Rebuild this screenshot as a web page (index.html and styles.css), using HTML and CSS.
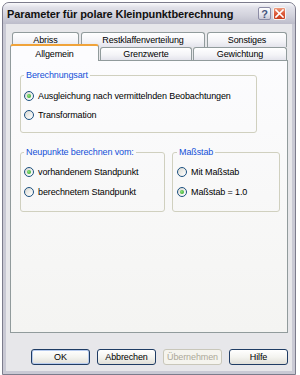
FILE: index.html
```html
<!DOCTYPE html>
<html lang="de">
<head>
  <meta charset="UTF-8" />
  <title>Parameter für polare Kleinpunktberechnung</title>
  <link rel="stylesheet" href="styles.css">
</head>
<body>
  <div class="window">
    <div class="titlebar">
      <span class="title">Parameter für polare Kleinpunktberechnung</span>
      <div class="caption-buttons">
        <span class="cap-btn help">?</span>
        <span class="cap-btn close">
          <svg width="9" height="9" viewBox="0 0 9 9">
            <path d="M1 1 L8 8 M8 1 L1 8" stroke="#fff" stroke-width="1.6" stroke-linecap="square" />
          </svg>
        </span>
      </div>
    </div>

    <div class="client">
      <div class="tabs">
        <div class="tab-row back">
          <div class="tab tab-abriss">Abriss</div>
          <div class="tab tab-rest">Restklaffenverteilung</div>
          <div class="tab tab-sonst">Sonstiges</div>
        </div>
        <div class="tab-row front">
          <div class="tab active tab-allg">Allgemein</div>
          <div class="tab tab-grenz">Grenzwerte</div>
          <div class="tab tab-gew">Gewichtung</div>
        </div>
      </div>

      <div class="page">
        <fieldset class="group group-art">
          <legend>Berechnungsart</legend>
          <div class="option"><span class="radio checked"></span>Ausgleichung nach vermittelnden Beobachtungen</div>
          <div class="option"><span class="radio"></span>Transformation</div>
        </fieldset>

        <div class="group-row">
          <fieldset class="group group-neu">
            <legend>Neupunkte berechnen vom:</legend>
            <div class="option"><span class="radio checked"></span>vorhandenem Standpunkt</div>
            <div class="option"><span class="radio"></span>berechnetem Standpunkt</div>
          </fieldset>
          <fieldset class="group group-mass">
            <legend>Maßstab</legend>
            <div class="option"><span class="radio"></span>Mit Maßstab</div>
            <div class="option"><span class="radio checked"></span>Maßstab = 1.0</div>
          </fieldset>
        </div>
      </div>

      <div class="buttons">
        <button class="btn default">OK</button>
        <button class="btn">Abbrechen</button>
        <button class="btn" disabled>Übernehmen</button>
        <button class="btn">Hilfe</button>
      </div>
    </div>
  </div>
</body>
</html>
```

FILE: styles.css
```css
body {
  margin: 0;
  background: #fff;
  font-family: 'Liberation Sans', Arial, sans-serif;
  font-size: 9px;
  letter-spacing: -0.12px;
  color: #000;
}

.window {
  margin: 2px 0 0 2px;
  width: 294px;
  height: 373px;
  box-sizing: border-box;
  border: 1px solid #7c7c8c;
  border-radius: 7px 7px 0 0;
  background: #c9c9d4;
  display: flex;
  flex-direction: column;
}

.titlebar {
  height: 21px;
  flex: none;
  display: flex;
  align-items: center;
  justify-content: space-between;
  padding: 0 9px 0 4px;
  border-radius: 6px 6px 0 0;
  background: linear-gradient(#fafafc, #e2e2ea 20%, #d2d2dc 60%, #bdbdca);
}

.title {
  font-weight: bold;
  font-size: 11px;
  letter-spacing: -0.1px;
  color: #111;
}

.caption-buttons {
  display: flex;
  gap: 2px;
}

.cap-btn {
  width: 13px;
  height: 13px;
  box-sizing: border-box;
  border-radius: 2px;
  display: flex;
  align-items: center;
  justify-content: center;
}

.help {
  border: 1px solid #8d8da6;
  background: linear-gradient(#ffffff, #e4e4ec 60%, #c9c9d6);
  color: #46557e;
  font-weight: bold;
  font-size: 11px;
}

.close {
  border: 1px solid #f4f4f4;
  background: linear-gradient(#ee9a7c, #dc5b3b 50%, #c63d1d);
}

.client {
  flex: 1;
  margin: 0 3px 3px;
  padding: 8px 4px 0;
  background: #e7e7ea;
  display: flex;
  flex-direction: column;
}

/* tabs */

.tab-row {
  display: flex;
}

.back {
  height: 15px;
  padding-left: 2px;
  gap: 2px;
}

.front {
  height: 13px;
  gap: 1px;
}

.tab {
  box-sizing: border-box;
  height: 100%;
  border: 1px solid #919b9c;
  border-bottom: none;
  border-radius: 3px 3px 0 0;
  background: linear-gradient(#ffffff, #f3f3f7 60%, #e4e4ec);
  display: flex;
  align-items: center;
  justify-content: center;
}

.tab-abriss { width: 67px; }
.tab-rest { width: 124px; }
.tab-sonst { width: 80px; }
.tab-allg { width: 89px; }
.tab-grenz { width: 92px; }
.tab-gew { width: 94px; }

.tab.active {
  height: 17px;
  margin-top: -3px;
  border-top: 2px solid #f0a33a;
  background: #fcfcfe;
  position: relative;
  z-index: 1;
}

/* page */

.page {
  height: 273px;
  box-sizing: border-box;
  border: 1px solid #919b9c;
  background: linear-gradient(#fcfcfe, #f4f4f2);
  padding: 9px 0 0 9px;
}

.group {
  margin: 0;
  box-sizing: border-box;
  border: 1px solid #d0d0bf;
  border-radius: 3px;
  padding: 4px 0 9px 3px;
}

.group legend {
  padding: 0 2px;
  line-height: 11px;
  color: #1450d8;
}

.group-art {
  width: 237px;
  padding-top: 5px;
  padding-bottom: 8px;
}

.group-row {
  display: flex;
  gap: 7px;
  margin-top: 14px;
}

.group-neu { width: 145px; }
.group-mass { width: 108px; padding-left: 4px; }

.option {
  display: flex;
  align-items: center;
  gap: 4px;
  height: 20px;
}

.group-art .option {
  height: 19px;
}

.radio {
  width: 10px;
  height: 10px;
  box-sizing: border-box;
  border: 1px solid #1c5180;
  border-radius: 50%;
  background: linear-gradient(135deg, #d8d8d2, #f6f6f4 70%, #fff);
  display: flex;
  align-items: center;
  justify-content: center;
}

.radio.checked::after {
  content: "";
  width: 4px;
  height: 4px;
  border-radius: 50%;
  background: radial-gradient(circle at 40% 40%, #8ee07a, #21a121);
}

/* buttons */

.buttons {
  display: flex;
  justify-content: flex-end;
  gap: 7px;
  margin-top: 16px;
}

.btn {
  width: 59px;
  height: 16px;
  padding: 0;
  border: 1px solid #1f3c64;
  border-radius: 3px;
  background: linear-gradient(#ffffff, #f4f4f0 50%, #e0dfd8);
  font-family: inherit;
  font-size: 9px;
  letter-spacing: inherit;
  color: #000;
}

.btn.default {
  box-shadow: inset 0 0 0 1px #b7cbee;
}

.btn:disabled {
  border-color: #c9c7ba;
  background: #f5f4ee;
  color: #aca899;
}
```
